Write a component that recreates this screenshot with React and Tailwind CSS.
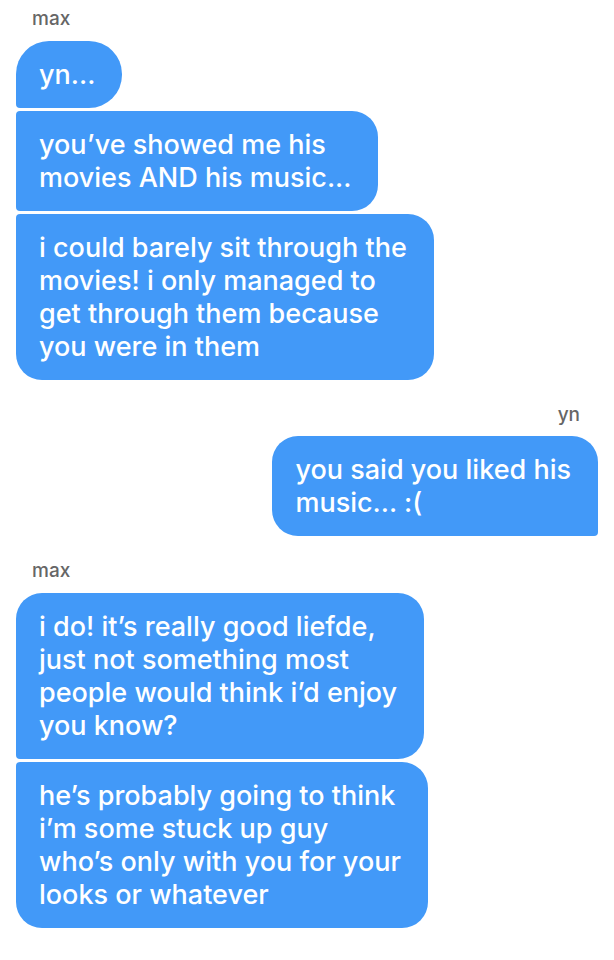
import React from "react";

const font = { fontFamily: "Inter, 'Noto Sans', sans-serif" };

function Bubble({ lines, corner }) {
  return (
    <div
      className={`w-fit bg-[#4299f8] text-white text-[27px] font-medium leading-[33px] pl-[23px] pr-[27px] py-[17px] ${corner}`}
    >
      {lines.map((l, i) => (
        <div key={i} className="whitespace-nowrap">{l}</div>
      ))}
    </div>
  );
}

export default function App() {
  return (
    <div className="w-[614px] h-[960px] bg-white px-4 pt-[8px] flex flex-col" style={font}>
      <div className="flex flex-col items-start">
        <div className="pl-4 text-[19px] leading-[22px] font-medium text-[#666] mb-[11px]">max</div>
        <div className="flex flex-col gap-[3px] items-start">
          <Bubble lines={["yn..."]} corner="rounded-[33px] rounded-bl-[4px]" />
          <Bubble
            lines={["you\u2019ve showed me his", "movies AND his music..."]}
            corner="rounded-[26px] rounded-tl-[4px] rounded-bl-[4px]"
          />
          <Bubble
            lines={[
              "i could barely sit through the",
              "movies! i only managed to",
              "get through them because",
              "you were in them",
            ]}
            corner="rounded-[26px] rounded-tl-[4px]"
          />
        </div>
      </div>

      <div className="flex flex-col items-end mt-[24px]">
        <div className="pr-[18px] text-[19px] leading-[22px] font-medium text-[#666] mb-[10px]">yn</div>
        <Bubble
          lines={["you said you liked his", "music... :("]}
          corner="rounded-[26px] rounded-br-[4px]"
        />
      </div>

      <div className="flex flex-col items-start mt-[24px]">
        <div className="pl-4 text-[19px] leading-[22px] font-medium text-[#666] mb-[11px]">max</div>
        <div className="flex flex-col gap-[3px] items-start">
          <Bubble
            lines={[
              "i do! it\u2019s really good liefde,",
              "just not something most",
              "people would think i\u2019d enjoy",
              "you know?",
            ]}
            corner="rounded-[26px] rounded-bl-[4px]"
          />
          <Bubble
            lines={[
              "he\u2019s probably going to think",
              "i\u2019m some stuck up guy",
              "who\u2019s only with you for your",
              "looks or whatever",
            ]}
            corner="rounded-[26px] rounded-tl-[4px]"
          />
        </div>
      </div>
    </div>
  );
}
